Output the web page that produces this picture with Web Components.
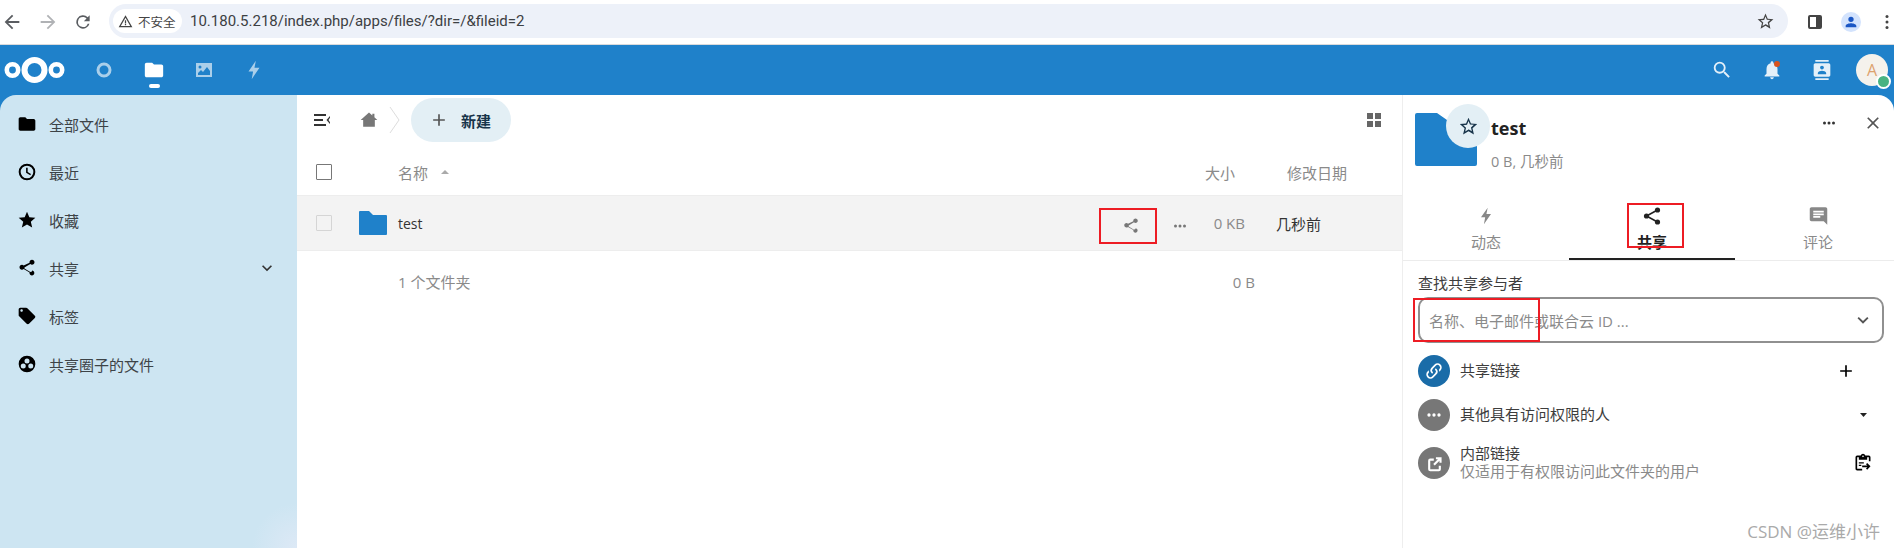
<!DOCTYPE html>
<html lang="zh">
<head>
<meta charset="UTF-8">
<title>Files</title>
<style>
  html, body { margin: 0; height: 100%; }
  body {
    width: 1894px; height: 548px; overflow: hidden; position: relative;
    font-family: "Open Sans", "Noto Sans CJK SC", sans-serif;
    display: flex; flex-direction: column; background: #fff;
  }
</style>
</head>
<body>
  <browser-bar url="10.180.5.218/index.php/apps/files/?dir=/&amp;fileid=2"></browser-bar>
  <nc-header></nc-header>
  <nc-workspace>
    <nc-nav slot="nav"></nc-nav>
    <file-list slot="main"></file-list>
    <share-panel slot="side"></share-panel>
  </nc-workspace>

  <script>
    // 公共的图标，每个都是 24x24 的 viewBox
    const ICONS = {
      folder: 'M10 4H4c-1.1 0-2 .9-2 2v12c0 1.1.9 2 2 2h16c1.1 0 2-.9 2-2V8c0-1.1-.9-2-2-2h-8l-2-2z',
      clock: 'M12 2a10 10 0 1 0 0 20 10 10 0 0 0 0-20zm0 17.6a7.6 7.6 0 1 1 0-15.2 7.6 7.6 0 0 1 0 15.2zM12.8 7h-1.9v6l5 2.9.9-1.5-4-2.4z',
      star: 'M12 17.3l6.2 3.7-1.6-7L22 9.2l-7.2-.6L12 2 9.2 8.6 2 9.2 7.5 14l-1.7 7z',
      starOutline: 'M22 9.2l-7.2-.6L12 2 9.2 8.6 2 9.2 7.5 14l-1.7 7 6.2-3.7 6.2 3.7-1.6-7L22 9.2zM12 15.4l-3.8 2.3 1-4.3-3.3-2.9 4.4-.4L12 5.6l1.7 4.1 4.4.4-3.3 2.9 1 4.3-3.8-2.3z',
      share: 'M18 16.1c-.8 0-1.4.3-2 .8l-7.1-4.2c.1-.2.1-.5.1-.7s0-.5-.1-.7L16 7.1c.5.5 1.2.9 2 .9 1.7 0 3-1.3 3-3s-1.3-3-3-3-3 1.3-3 3c0 .2 0 .5.1.7L8 8.9C7.5 8.4 6.8 8 6 8c-1.7 0-3 1.3-3 3s1.3 3 3 3c.8 0 1.5-.3 2-.8l7.1 4.2c-.1.2-.1.4-.1.6 0 1.6 1.3 2.9 2.9 2.9s2.9-1.3 2.9-2.9-1.2-2.9-2.8-2.9z',
      tag: 'M21.4 11.6l-9-9C12 2.2 11.5 2 11 2H4c-1.1 0-2 .9-2 2v7c0 .6.2 1.1.6 1.4l9 9c.4.4.9.6 1.4.6s1.1-.2 1.4-.6l7-7c.4-.4.6-.9.6-1.4s-.2-1.1-.6-1.4zM5.5 7C4.7 7 4 6.3 4 5.5S4.7 4 5.5 4 7 4.7 7 5.5 6.3 7 5.5 7z',
      bolt: 'M14 2L6 13.5h5L9.5 22 18 9.5h-5.500z',
      home: 'M12 3L2 12h3v8h14v-8h3l-3.5-3.2V4.5H16v2z',
      plus: 'M19 13h-6v6h-2v-6H5v-2h6V5h2v6h6z',
      dots: 'M6 10a2 2 0 1 0 0 4 2 2 0 0 0 0-4zm6 0a2 2 0 1 0 0 4 2 2 0 0 0 0-4zm6 0a2 2 0 1 0 0 4 2 2 0 0 0 0-4z',
      close: 'M19 6.4L17.6 5 12 10.6 6.4 5 5 6.4 10.6 12 5 17.6 6.4 19 12 13.4 17.6 19 19 17.6 13.4 12z',
      chevron: 'M7.4 8.6L12 13.2l4.6-4.6L18 10l-6 6-6-6z',
      comment: 'M20 2H4c-1.1 0-2 .9-2 2v12c0 1.1.9 2 2 2h14l4 4V4c0-1.1-.9-2-2-2zM6 9h12v2H6zm8 5H6v-2h8zm4-6H6V6h12z',
      link: 'M10.6 13.4a1 1 0 0 1-1.4 1.4 5 5 0 0 1 0-7l3.5-3.6a5 5 0 0 1 7.1 7.1l-1.5 1.5c0-.8-.1-1.6-.4-2.4l.5-.5a3 3 0 0 0-4.3-4.3l-3.5 3.6a3 3 0 0 0 0 4.2zm2.8-4.2a1 1 0 0 1 1.4 0 5 5 0 0 1 0 7l-3.5 3.6a5 5 0 0 1-7.1-7.1l1.5-1.5c0 .8.1 1.6.4 2.4l-.5.5a3 3 0 0 0 4.3 4.3l3.5-3.6a3 3 0 0 0 0-4.2 1 1 0 0 1 0-1.400z',
      external: 'M18 20H6V8h5V5H6a3 3 0 0 0-3 3v12a3 3 0 0 0 3 3h12a3 3 0 0 0 3-3v-5h-3zM14 3v3h2.800l-6.600 6.600 2.200 2.200L19 8.200V11h3V3z',
      search: 'M15.5 14h-.79l-.28-.27A6.471 6.471 0 0 0 16 9.5 6.5 6.5 0 1 0 9.5 16c1.61 0 3.09-.59 4.23-1.57l.27.28v.79l5 4.99L20.49 19l-4.99-5zm-6 0C7.01 14 5 11.99 5 9.5S7.01 5 9.5 5 14 7.01 14 9.5 11.99 14 9.5 14z',
      bell: 'M12 22c1.1 0 2-.9 2-2h-4c0 1.1.9 2 2 2zm6-6v-5c0-3.1-1.6-5.6-4.5-6.3V4c0-.8-.7-1.5-1.5-1.5s-1.5.7-1.5 1.5v.7C7.6 5.4 6 7.9 6 11v5l-2 2v1h16v-1l-2-2z',
      contacts: 'M20 0H4v2h16V0zM4 24h16v-2H4v2zM20 4H4c-1.1 0-2 .9-2 2v12c0 1.1.9 2 2 2h16c1.1 0 2-.9 2-2V6c0-1.1-.9-2-2-2zm-8 2.8c1.2 0 2.3 1 2.3 2.2s-1 2.3-2.3 2.3-2.3-1-2.3-2.3 1.1-2.2 2.3-2.2zM17 17H7v-1.5c0-1.7 3.3-2.5 5-2.5s5 .8 5 2.5V17z',
      back: 'M20 11H7.8l5.6-5.6L12 4l-8 8 8 8 1.4-1.4L7.8 13H20z',
      forward: 'M12 4l-1.4 1.4 5.6 5.6H4v2h12.2l-5.6 5.6L12 20l8-8z',
      reload: 'M17.65 6.35A8 8 0 1 0 19.73 14h-2.08A6 6 0 1 1 12 6c1.66 0 3.14.69 4.22 1.78L13 11h7V4l-2.35 2.35z',
      warn: 'M12 2L1 21h22L12 2zm0 4l7.5 13h-15L12 6zm-1 4v5h2v-5h-2zm0 6v2h2v-2h-2z',
      person: 'M12 12a4 4 0 1 0 0-8 4 4 0 0 0 0 8zm0 2c-2.7 0-8 1.3-8 4v2h16v-2c0-2.7-5.3-4-8-4z',
      circles: 'M12 2a10 10 0 1 0 0 20 10 10 0 0 0 0-20zm0 3.5a3 3 0 1 1 0 6 3 3 0 0 1 0-6zM7.5 17.5a3 3 0 1 1 0-6 3 3 0 0 1 0 6zm9 0a3 3 0 1 1 0-6 3 3 0 0 1 0 6z',
      clipboard: 'M19 3h-4.2A3 3 0 0 0 12 1a3 3 0 0 0-2.8 2H5a2 2 0 0 0-2 2v14c0 1.1.9 2 2 2h6v-2H5V5h2v3h10V5h2v5h2V5a2 2 0 0 0-2-2zm-7 2a1 1 0 1 1 0-2 1 1 0 0 1 0 2zm5 7l-1.4 1.4 1.6 1.6H11v2h6.2l-1.6 1.6L17 20l4-4zM7 11h6v1.5H7zm0 3h3v1.5H7z'
    };

    // 小图标组件 <nc-icon name="share" size="24" color="#000">
    class NcIcon extends HTMLElement {
      connectedCallback() {
        const size = this.getAttribute('size') || 24;
        const color = this.getAttribute('color') || 'currentColor';
        const shadow = this.attachShadow({ mode: 'open' });
        shadow.innerHTML = `
          <style>
            :host { display: inline-flex; width: ${size}px; height: ${size}px; flex: none; }
            svg { width: 100%; height: 100%; display: block; }
          </style>
          <svg viewBox="0 0 24 24"><path fill="${color}" fill-rule="evenodd" d="${ICONS[this.getAttribute('name')]}"/></svg>`;
      }
    }
    customElements.define('nc-icon', NcIcon);

    class BrowserBar extends HTMLElement {
      constructor() {
        super();
        const shadow = this.attachShadow({ mode: 'open' });
        shadow.innerHTML = `
          <style>
            :host { display: flex; align-items: center; height: 45px; box-sizing: border-box; border-bottom: 1px solid #d9dadc; background: #fff; flex: none; }
            .nav { display: flex; width: 109px; padding-left: 1px; box-sizing: border-box; gap: 14px; align-items: center; margin-top: -1px; flex: none; }
            .omni { width: 1679px; height: 34px; border-radius: 17px; background: #edf1f9; display: flex; align-items: center; padding: 0 13px 0 4px; box-sizing: border-box; margin-top: -2px; flex: none; }
            .chip { height: 24px; width: 69px; box-sizing: border-box; background: #fff; border-radius: 12px; display: flex; align-items: center; gap: 5px; padding-left: 5px; font-size: 12.5px; color: #444; white-space: nowrap; flex: none; }
            .url { margin-left: 8px; font: 15px "Roboto", "Liberation Sans", sans-serif; color: #3c4043; flex: 1; }
            .right { display: flex; align-items: center; margin-left: 20px; margin-top: -1px; }
            .avatar { width: 20px; height: 20px; border-radius: 50%; background: #d3e3fd; display: flex; align-items: center; justify-content: center; margin: 0 24px 0 19px; }
            .panel { width: 14px; height: 14px; border: 2px solid #444; border-radius: 2px; box-sizing: border-box; background: linear-gradient(90deg, transparent 60%, #444 60%); }
          </style>
          <div class="nav">
            <nc-icon name="back" size="22" color="#5a5d61"></nc-icon>
            <nc-icon name="forward" size="22" color="#b0b2b5"></nc-icon>
            <nc-icon name="reload" size="20" color="#5a5d61"></nc-icon>
          </div>
          <div class="omni">
            <div class="chip"><nc-icon name="warn" size="15" color="#444"></nc-icon>不安全</div>
            <div class="url"></div>
            <nc-icon name="starOutline" size="19" color="#444"></nc-icon>
          </div>
          <div class="right">
            <div class="panel"></div>
            <div class="avatar"><nc-icon name="person" size="16" color="#1a56c4"></nc-icon></div>
            <svg width="4" height="16" viewBox="0 0 4 16"><circle cx="2" cy="2.5" r="1.5" fill="#444"/><circle cx="2" cy="8" r="1.5" fill="#444"/><circle cx="2" cy="13.5" r="1.5" fill="#444"/></svg>
          </div>`;
        shadow.querySelector('.url').textContent = this.getAttribute('url');
      }
    }
    customElements.define('browser-bar', BrowserBar);

    class NcHeader extends HTMLElement {
      constructor() {
        super();
        const shadow = this.attachShadow({ mode: 'open' });
        shadow.innerHTML = `
          <style>
            :host { display: flex; align-items: center; height: 50px; background: #1f81ca; flex: none; padding-left: 4px; }
            .logo { width: 61px; height: 28px; flex: none; }
            .apps { display: flex; margin-left: 14px; }
            .app { width: 50px; height: 50px; display: flex; align-items: center; justify-content: center; position: relative; opacity: .62; }
            .app.on { opacity: 1; }
            .app.on::after { content: ""; position: absolute; left: 20px; bottom: 7px; width: 11px; height: 4px; background: #fff; border-radius: 2px; }
            .right { margin-left: auto; display: flex; align-items: center; }
            .btn { width: 50px; height: 50px; display: flex; align-items: center; justify-content: center; position: relative; }
            .dot { position: absolute; width: 6px; height: 6px; background: #d9541e; border-radius: 50%; top: 16px; left: 27px; }
            .av { width: 32px; height: 32px; border-radius: 50%; background: #f5f2ec; color: #dda26f; display: flex; align-items: center; justify-content: center; font-size: 16px; margin: 0 6px 0 9px; position: relative; }
            .av::after { content: ""; position: absolute; width: 11px; height: 11px; right: -3px; bottom: -3px; border-radius: 50%; background: #49b382; border: 2px solid #fff; }
          </style>
          <svg class="logo" viewBox="0 0 61 28">
            <g fill="none" stroke="#fff">
              <circle cx="30.5" cy="14" r="10" stroke-width="6"/>
              <circle cx="8.5" cy="14" r="5.7" stroke-width="4.6"/>
              <circle cx="52.5" cy="14" r="5.7" stroke-width="4.6"/>
            </g>
          </svg>
          <div class="apps">
            <div class="app"><svg width="18" height="18" viewBox="0 0 18 18"><circle cx="9" cy="9" r="6" fill="none" stroke="#fff" stroke-width="3"/></svg></div>
            <div class="app on"><nc-icon name="folder" size="22" color="#fff"></nc-icon></div>
            <div class="app"><svg width="20" height="20" viewBox="0 0 20 20"><path fill="#fff" fill-rule="evenodd" d="M2 3h16v14H2zM4 13l3-3 2 2 4-5 3 4v4H4zM6 5.5a1.5 1.5 0 1 0 0 3 1.5 1.5 0 0 0 0-3z"/></svg></div>
            <div class="app"><nc-icon name="bolt" size="22" color="#fff"></nc-icon></div>
          </div>
          <div class="right">
            <div class="btn"><nc-icon name="search" size="22" color="#e4f0f9"></nc-icon></div>
            <div class="btn"><nc-icon name="bell" size="22" color="#e4f0f9"></nc-icon><span class="dot"></span></div>
            <div class="btn"><nc-icon name="contacts" size="20" color="#e4f0f9"></nc-icon></div>
            <div class="av">A</div>
          </div>`;
      }
    }
    customElements.define('nc-header', NcHeader);

    class NcWorkspace extends HTMLElement {
      constructor() {
        super();
        const shadow = this.attachShadow({ mode: 'open' });
        shadow.innerHTML = `
          <style>
            :host { display: grid; grid-template-columns: 297px 1105px 492px; flex: 1; min-height: 0; background: #1f81ca; }
            ::slotted(*) { min-width: 0; }
          </style>
          <slot name="nav"></slot><slot name="main"></slot><slot name="side"></slot>`;
      }
    }
    customElements.define('nc-workspace', NcWorkspace);

    class NavItem extends HTMLElement {
      constructor() {
        super();
        const shadow = this.attachShadow({ mode: 'open' });
        shadow.innerHTML = `
          <style>
            :host { display: flex; align-items: center; height: 48px; padding-left: 17px; padding-right: 20px; color: #3d4347; font-size: 15px; gap: 12px; }
            ::slotted([slot=end]) { margin-left: auto; }
          </style>
          <slot name="icon"></slot><span><slot></slot></span><slot name="end"></slot>`;
      }
    }
    customElements.define('nav-item', NavItem);

    class NcNav extends HTMLElement {
      constructor() {
        super();
        const shadow = this.attachShadow({ mode: 'open' });
        shadow.innerHTML = `
          <style>
            :host { display: block; background: radial-gradient(circle at 100% 100%, #dde9f6 0, #cde5f2 45px), linear-gradient(#cfe4f3, #cde5f2); border-top-left-radius: 16px; padding-top: 5px; overflow: hidden; }
          </style>
          <nav-item><nc-icon slot="icon" name="folder" size="20" color="#000"></nc-icon>全部文件</nav-item>
          <nav-item><nc-icon slot="icon" name="clock" size="20" color="#000"></nc-icon>最近</nav-item>
          <nav-item><nc-icon slot="icon" name="star" size="20" color="#000"></nc-icon>收藏</nav-item>
          <nav-item><nc-icon slot="icon" name="share" size="20" color="#000"></nc-icon>共享<nc-icon slot="end" name="chevron" size="20" color="#333"></nc-icon></nav-item>
          <nav-item><nc-icon slot="icon" name="tag" size="20" color="#000"></nc-icon>标签</nav-item>
          <nav-item><nc-icon slot="icon" name="circles" size="20" color="#000"></nc-icon>共享圈子的文件</nav-item>`;
      }
    }
    customElements.define('nc-nav', NcNav);

    class FileList extends HTMLElement {
      constructor() {
        super();
        const shadow = this.attachShadow({ mode: 'open' });
        shadow.innerHTML = `
          <style>
            :host { display: block; background: #fff; font-size: 15px; color: #8a8a8a; }
            .bar { display: flex; align-items: center; height: 50px; padding-left: 17px; padding-right: 21px; box-sizing: border-box; }
            .crumb { width: 12px; height: 28px; margin: 0 10px 0 10px; }
            .new { display: flex; align-items: center; height: 44px; width: 100px; border-radius: 22px; background: #e3eff5; color: #18344a; font-weight: 600; padding-left: 18px; box-sizing: border-box; gap: 12px; }
            .grid { margin-left: auto; width: 14px; height: 14px; display: grid; grid-template: 1fr 1fr / 1fr 1fr; gap: 2px; }
            .grid i { background: #666; }
            .row { display: grid; grid-template-columns: 101px 762px 95px 147px; align-items: center; }
            .box { width: 16px; height: 16px; box-sizing: border-box; margin-left: 19px; border: 1.5px solid #777; border-radius: 1px; }
            .head { height: 50px; padding-top: 4px; box-sizing: border-box; }
            .name { display: flex; align-items: center; gap: 13px; }
            .sort { width: 0; height: 0; border: 4px solid transparent; border-bottom: 4px solid #aaa; border-top: 0; }
            .file { height: 56px; background: #f3f3f3; border-top: 1px solid #ededed; border-bottom: 1px solid #ededed; box-sizing: border-box; }
            .file .box { border-color: #d5d5d5; border-width: 1px; }
            .fname { display: flex; align-items: center; color: #333; position: relative; height: 0; font-size: 14px; }
            .folder { position: absolute; left: -39px; top: -12px; width: 28px; height: 24px; }
            .acts { display: flex; align-items: center; position: absolute; right: -29px; top: -6px; }
            .size { text-align: right; }
            .when { color: #333; padding-left: 21px; }
            .hd-when { padding-left: 32px; }
            .sum { height: 56px; box-sizing: border-box; padding-top: 5px; }
          </style>
          <div class="bar">
            <svg width="18" height="14" viewBox="0 0 18 14"><path fill="#333" d="M0 1h12v2H0zM0 6h9v2H0zM0 11h12v2H0zM16 3l-3.5 4 3.5 4V9.2L14.500 7 16 4.800z"/></svg>
            <nc-icon name="home" size="20" color="#777" style="margin-left:27px"></nc-icon>
            <svg class="crumb" viewBox="0 0 12 28"><path fill="none" stroke="#ddd" d="M1 1l9 13-9 13"/></svg>
            <div class="new"><nc-icon name="plus" size="20" color="#555"></nc-icon><span>新建</span></div>
            <div class="grid"><i></i><i></i><i></i><i></i></div>
          </div>
          <div class="row head">
            <div class="box" style="background:#fff"></div>
            <div class="name"><span>名称</span><i class="sort"></i></div>
            <div class="size" style="padding-right:20px">大小</div>
            <div class="hd-when">修改日期</div>
          </div>
          <div class="row file">
            <div class="box"></div>
            <div class="fname">
              <svg class="folder" viewBox="0 0 28 24"><path fill="#1f81ca" d="M1 0h9l4 4h13a1 1 0 0 1 1 1v18a1 1 0 0 1-1 1H1a1 1 0 0 1-1-1V1a1 1 0 0 1 1-1z"/></svg>
              test
              <div class="acts">
                <nc-icon name="share" size="18" color="#777" style="margin-right:31px"></nc-icon>
                <nc-icon name="dots" size="18" color="#777"></nc-icon>
              </div>
            </div>
            <div class="size" style="padding-right:10px">0 KB</div>
            <div class="when">几秒前</div>
          </div>
          <div class="row sum">
            <div></div>
            <div>1 个文件夹</div>
            <div class="size">0 B</div>
            <div></div>
          </div>`;
      }
    }
    customElements.define('file-list', FileList);

    // 右侧面板中的一行 <share-row>
    class ShareRow extends HTMLElement {
      constructor() {
        super();
        const shadow = this.attachShadow({ mode: 'open' });
        shadow.innerHTML = `
          <style>
            :host { display: flex; align-items: center; height: 44px; gap: 10px; color: #3d3d3d; font-size: 15px; line-height: 18px; }
            .circle { width: 32px; height: 32px; border-radius: 50%; display: flex; align-items: center; justify-content: center; background: var(--circle, #777); flex: none; }
            .text { flex: 1; margin-top: -2px; }
            ::slotted([slot=sub]) { display: block; color: #8a8a8a; }
          </style>
          <div class="circle"><slot name="icon"></slot></div>
          <div class="text"><slot></slot><slot name="sub"></slot></div>
          <slot name="end"></slot>`;
      }
    }
    customElements.define('share-row', ShareRow);

    class SidebarTab extends HTMLElement {
      constructor() {
        super();
        const shadow = this.attachShadow({ mode: 'open' });
        shadow.innerHTML = `
          <style>
            :host { flex: none; width: 166px; display: flex; flex-direction: column; align-items: center; height: 64px; box-sizing: border-box; color: #8a8a8a; font-size: 15px; line-height: 20px; padding-top: 8px; gap: 4px; }
            :host([active]) { color: #222; border-bottom: 2px solid #222; font-weight: 600; }
            ::slotted([slot=icon]) { height: 24px; }
          </style>
          <slot name="icon"></slot><slot></slot>`;
      }
    }
    customElements.define('sidebar-tab', SidebarTab);

    class SharePanel extends HTMLElement {
      constructor() {
        super();
        const shadow = this.attachShadow({ mode: 'open' });
        shadow.innerHTML = `
          <style>
            :host { display: block; background: #fff; border-top-right-radius: 16px; border-left: 1px solid #eee; position: relative; overflow: hidden; }
            .top { display: flex; height: 101px; padding: 18px 0 0 12px; box-sizing: border-box; position: relative; }
            .big { width: 62px; height: 53px; flex: none; }
            .fav { position: absolute; left: 43px; top: 9px; width: 44px; height: 44px; border-radius: 50%; background: #e3eff5; display: flex; align-items: center; justify-content: center; }
            .title { font-size: 18px; font-weight: 700; color: #222; margin: 3px 0 0 14px; line-height: 24px; }
            .meta { font-size: 14.5px; color: #8a8a8a; margin: 10px 0 0 14px; }
            .ctl { position: absolute; top: 18px; right: 11px; display: flex; align-items: center; gap: 25px; }
            .tabs { display: flex; height: 65px; box-sizing: border-box; border-bottom: 1px solid #ececec; }
            .body { padding: 0 10px 0 15px; }
            label { display: block; font-size: 15px; color: #3d3d3d; margin-top: 12px; line-height: 20px; }
            .input { height: 46px; margin: 4px 0 6px; box-sizing: border-box; border: 2px solid #909090; border-radius: 10px; display: flex; align-items: center; padding: 0 8px 0 9px; color: #8a8a8a; font-size: 15px; justify-content: space-between; }
            .wm { position: absolute; right: 14px; bottom: 5px; font-size: 17px; color: #aaa; }
          </style>
          <div class="top">
            <svg class="big" viewBox="0 0 62 53"><path fill="#1f81ca" d="M2 0h20l10 7h28a2 2 0 0 1 2 2v42a2 2 0 0 1-2 2H2a2 2 0 0 1-2-2V2a2 2 0 0 1 2-2z"/></svg>
            <div class="fav"><nc-icon name="starOutline" size="21" color="#18344a"></nc-icon></div>
            <div>
              <div class="title">test</div>
              <div class="meta">0 B, 几秒前</div>
            </div>
            <div class="ctl">
              <nc-icon name="dots" size="18" color="#333"></nc-icon>
              <nc-icon name="close" size="20" color="#555"></nc-icon>
            </div>
          </div>
          <div class="tabs">
            <sidebar-tab><nc-icon slot="icon" name="bolt" size="20" color="#888"></nc-icon>动态</sidebar-tab>
            <sidebar-tab active>
              <svg slot="icon" width="20" height="24" viewBox="0 0 20 24"><path fill="none" stroke="#222" stroke-width="1.6" d="M15.5 6L4.500 12l11 6"/><circle cx="15.5" cy="6" r="2.6" fill="#222"/><circle cx="4.500" cy="12" r="2.6" fill="#222"/><circle cx="15.5" cy="18" r="2.6" fill="#222"/></svg>
              共享
            </sidebar-tab>
            <sidebar-tab><nc-icon slot="icon" name="comment" size="21" color="#888"></nc-icon>评论</sidebar-tab>
          </div>
          <div class="body">
            <label>查找共享参与者</label>
            <div class="input"><span>名称、电子邮件或联合云 ID ...</span><nc-icon name="chevron" size="22" color="#555"></nc-icon></div>
            <share-row style="--circle:#1a6ca8">
              <nc-icon slot="icon" name="link" size="20" color="#fff"></nc-icon>共享链接
              <nc-icon slot="end" name="plus" size="20" color="#000" style="margin-right:28px"></nc-icon>
            </share-row>
            <share-row>
              <nc-icon slot="icon" name="dots" size="20" color="#fff"></nc-icon>其他具有访问权限的人
              <svg slot="end" width="7" height="4" viewBox="0 0 7 4" style="margin-right:17px"><path d="M0 0h7L3.5 4z" fill="#222"/></svg>
            </share-row>
            <share-row style="margin-top:4px">
              <nc-icon slot="icon" name="external" size="17" color="#fff"></nc-icon>内部链接
              <span slot="sub">仅适用于有权限访问此文件夹的用户</span>
              <nc-icon slot="end" name="clipboard" size="20" color="#000" style="margin-right:11px"></nc-icon>
            </share-row>
          </div>
          <div class="wm">CSDN @运维小许</div>`;
      }
    }
    customElements.define('share-panel', SharePanel);

    // 截图上的红色标注框，盖在内容上面
    class RedMark extends HTMLElement {
      constructor() {
        super();
        const shadow = this.attachShadow({ mode: 'open' });
        shadow.innerHTML = `<style>:host { display: block; position: absolute; box-sizing: border-box; border: 2px solid #ed1c24; pointer-events: none; }</style>`;
      }
    }
    customElements.define('red-mark', RedMark);

    [[1099, 208, 58, 36], [1627, 203, 57, 45], [1413, 298, 127, 44]].forEach(([x, y, w, h]) => {
      const m = document.createElement('red-mark');
      m.style.cssText = `left:${x}px;top:${y}px;width:${w}px;height:${h}px`;
      document.body.appendChild(m);
    });
  </script>
</body>
</html>
